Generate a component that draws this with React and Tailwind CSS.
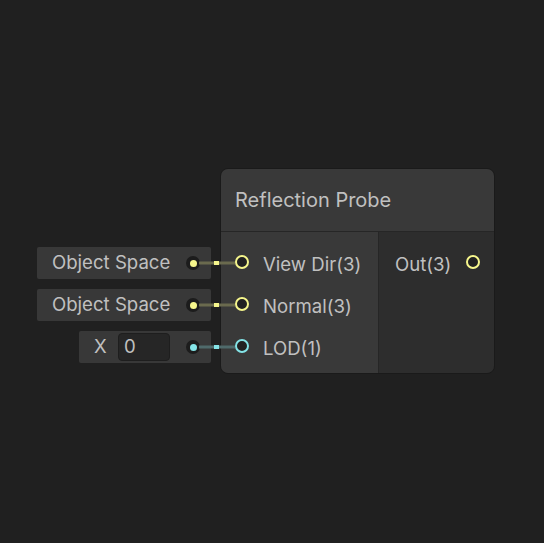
const FONT = { fontFamily: 'Inter, "Noto Sans", sans-serif' }

const YELLOW = '#f6f68c'
const CYAN = '#84e4e7'

function FieldDot({ color }) {
  return (
    <span className="w-[14px] h-[14px] rounded-full bg-[#1c1c1c] flex items-center justify-center flex-shrink-0">
      <span className="w-[7px] h-[7px] rounded-full" style={{ background: color }} />
    </span>
  )
}

function PortRing({ color }) {
  return (
    <span
      className="w-[14px] h-[14px] rounded-full border-2 bg-[#222222] flex-shrink-0 box-border"
      style={{ borderColor: color }}
    />
  )
}

function ObjectField() {
  return (
    <div className="w-[174px] h-[32px] rounded-[2px] bg-[#383838] flex items-center pl-[15px] pr-[11px]">
      <span className="flex-1 text-[18.6px] text-[#c0c0c0]">Object Space</span>
      <FieldDot color={YELLOW} />
    </div>
  )
}

function FloatField() {
  return (
    <div className="w-[132px] h-[32px] rounded-[2px] bg-[#383838] flex items-center pl-[15px] pr-[11px]">
      <span className="text-[18.6px] text-[#c0c0c0] w-[24px]">X</span>
      <span className="w-[52px] h-[28px] rounded-[4px] bg-[#262626] border border-[#1e1e1e] flex items-center pl-[5px] text-[18.6px] text-[#c0c0c0]">0</span>
      <span className="flex-1" />
      <FieldDot color={CYAN} />
    </div>
  )
}

function InputRow({ label, color }) {
  return (
    <div className="h-[42px] flex items-center pl-[14px] gap-[14px]">
      <PortRing color={color} />
      <span className="text-[18.6px] text-[#c0c0c0] translate-y-[3px]">{label}</span>
    </div>
  )
}

function Wire({ y, color, dim }) {
  return (
    <g>
      <line x1="199" y1={y} x2="235" y2={y} stroke={dim} strokeWidth="3" />
      <rect x="214" y={y - 2} width="5" height="4" fill={color} />
    </g>
  )
}

export default function App() {
  return (
    <div className="relative w-[544px] h-[543px] bg-[#202020] overflow-hidden" style={FONT}>
      <div className="absolute left-[37px] top-[169px] flex items-start gap-[9px]">
        {/* inline input fields */}
        <div className="mt-[78px] flex flex-col items-end gap-[10px]">
          <ObjectField />
          <ObjectField />
          <FloatField />
        </div>

        {/* node */}
        <div className="w-[275px] h-[206px] rounded-[8px] border border-[#1a1a1a] overflow-hidden flex flex-col -mt-px">
          <div className="h-[63px] bg-[#393939] border-b border-[#262626] flex items-center pl-[14px]">
            <span className="text-[20px] text-[#c0c0c0]">Reflection Probe</span>
          </div>
          <div className="flex-1 flex">
            <div className="w-[158px] bg-[#393939] border-r border-[#262626] pt-[9px] flex flex-col">
              <InputRow label="View Dir(3)" color={YELLOW} />
              <InputRow label="Normal(3)" color={YELLOW} />
              <InputRow label="LOD(1)" color={CYAN} />
            </div>
            <div className="flex-1 bg-[#2d2d2d] pt-[9px]">
              <div className="h-[42px] flex items-center pl-[16px] pr-[14px]">
                <span className="flex-1 text-[18.6px] text-[#c0c0c0] translate-y-[3px]">Out(3)</span>
                <PortRing color={YELLOW} />
              </div>
            </div>
          </div>
        </div>
      </div>

      {/* wires */}
      <svg className="absolute inset-0 pointer-events-none" width="544" height="543">
        <Wire y={263} color={YELLOW} dim="#6a6a4e" />
        <Wire y={305} color={YELLOW} dim="#6a6a4e" />
        <Wire y={347} color={CYAN} dim="#4f6a6b" />
      </svg>
    </div>
  )
}
